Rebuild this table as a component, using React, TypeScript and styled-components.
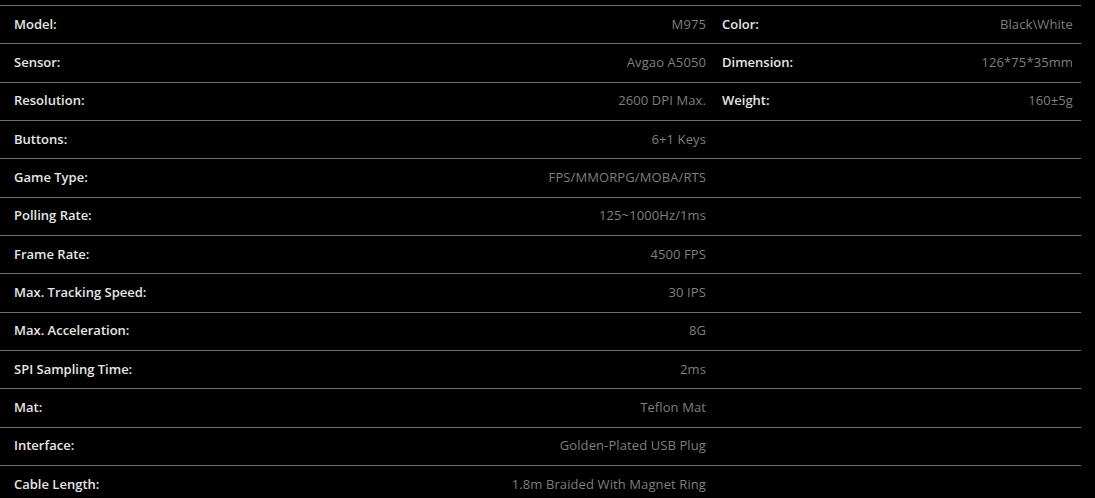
import styled, { createGlobalStyle } from 'styled-components';

const Global = createGlobalStyle`
  html, body { margin: 0; padding: 0; background: #000; }
  body { font-family: "Open Sans", "Liberation Sans", Arial, sans-serif; }
`;

const Page = styled.div`
  background: #000; padding-top: 5px; width: 1095px; min-height: 498px;
`;
const Table = styled.div`width: 1081px;`;
const Row = styled.div`
  display: flex; height: 38.33px; box-sizing: border-box;
  border-top: 1px solid #6f6f6f;
`;
const Half = styled.div<{ side: 'left' | 'right' }>`
  display: flex; align-items: center; justify-content: space-between;
  width: ${p => (p.side === 'left' ? '714px' : '367px')};
  padding: ${p => (p.side === 'left' ? '0 8px 2px 14px' : '0 8px 2px')};
  box-sizing: border-box;
`;
const Label = styled.span`
  font-size: 13px; font-weight: 600; color: #e6e6e6; letter-spacing: 0;
`;
const Value = styled.span`
  font-size: 13px; font-weight: 400; color: #7f7f7f; letter-spacing: 0.1px;
`;

const left: [string, string][] = [
  ['Model:', 'M975'],
  ['Sensor:', 'Avgao A5050'],
  ['Resolution:', '2600 DPI Max.'],
  ['Buttons:', '6+1 Keys'],
  ['Game Type:', 'FPS/MMORPG/MOBA/RTS'],
  ['Polling Rate:', '125~1000Hz/1ms'],
  ['Frame Rate:', '4500 FPS'],
  ['Max. Tracking Speed:', '30 IPS'],
  ['Max. Acceleration:', '8G'],
  ['SPI Sampling Time:', '2ms'],
  ['Mat:', 'Teflon Mat'],
  ['Interface:', 'Golden-Plated USB Plug'],
  ['Cable Length:', '1.8m Braided With Magnet Ring'],
];

const right: [string, string][] = [
  ['Color:', 'Black\\White'],
  ['Dimension:', '126*75*35mm'],
  ['Weight:', '160±5g'],
];

export default function App() {
  return (
    <Page>
      <Global />
      <Table>
        {left.map(([l, v], i) => (
          <Row key={l}>
            <Half side="left">
              <Label>{l}</Label>
              <Value>{v}</Value>
            </Half>
            <Half side="right">
              {right[i] && (
                <>
                  <Label>{right[i][0]}</Label>
                  <Value>{right[i][1]}</Value>
                </>
              )}
            </Half>
          </Row>
        ))}
      </Table>
    </Page>
  );
}
